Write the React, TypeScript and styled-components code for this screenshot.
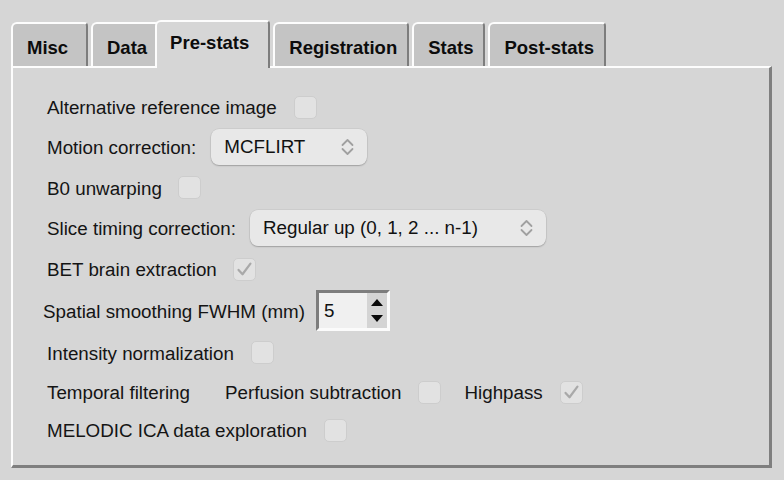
import React from "react";
import styled, { createGlobalStyle, css } from "styled-components";

const Global = createGlobalStyle`
  html, body { margin: 0; padding: 0; background: #d6d6d6; }
  body { font-family: "Liberation Sans", Arial, Helvetica, sans-serif; color: #111; }
  * { box-sizing: border-box; }
`;

const Window = styled.div`
  width: 784px;
  height: 480px;
  padding: 20px 0 0 11px;
  background: #d6d6d6;
  overflow: hidden;
`;

const TabBar = styled.div`
  display: flex;
  align-items: flex-end;
  gap: 3px;
  height: 46px;
  position: relative;
  z-index: 2;
`;

const Tab = styled.div<{ $active?: boolean; $minW?: number }>`
  display: flex;
  align-items: center;
  min-width: ${(p) => p.$minW ?? 0}px;
  height: 44px;
  padding: 5px 10px 0 14px;
  font-size: 18.5px;
  font-weight: 700;
  color: #0c0c0c;
  background: #c4c4c4;
  border-top: 2px solid #fdfdfd;
  border-left: 2px solid #fdfdfd;
  border-right: 2px solid #7d7d7d;
  border-top-left-radius: 6px;
  border-top-right-radius: 4px;
  white-space: nowrap;
  ${(p) =>
    p.$active &&
    css`
      position: relative;
      height: 48px;
      margin: 0 0 -2px -7px;
      padding: 0 19px 4px 13px;
      background: #d6d6d6;
    `}
`;

const Panel = styled.div`
  width: 761px;
  height: 402px;
  background: #d6d6d6;
  border-top: 2px solid #fdfdfd;
  border-left: 2px solid #fdfdfd;
  border-right: 3px solid #7f7f7f;
  border-bottom: 3px solid #7f7f7f;
  padding: 20px 0 0 34px;
  display: grid;
  grid-template-rows: 40px 40px 41px 40px 42px 42px 41px 38px 38px;
  align-content: start;
`;

const Row = styled.div<{ $gap?: number; $shift?: number }>`
  display: flex;
  align-items: center;
  gap: ${(p) => p.$gap ?? 17}px;
  margin-left: ${(p) => p.$shift ?? 0}px;
`;

const Label = styled.span<{ $ml?: number }>`
  font-size: 18.8px;
  color: #141414;
  white-space: nowrap;
  margin-left: ${(p) => p.$ml ?? 0}px;
`;

const Box = styled.div`
  width: 23px;
  height: 23px;
  margin-top: -2px;
  border-radius: 5px;
  background: #e2e2e2;
  border: 1px solid #cdcdcd;
  display: flex;
  align-items: center;
  justify-content: center;
`;

const Check = ({ checked }: { checked?: boolean }) => (
  <Box>
    {checked && (
      <svg width="19" height="19" viewBox="0 0 24 24">
        <path d="M4.5 12.5 L9.5 18 L19.5 4.5" fill="none" stroke="#a9a9a9" strokeWidth="2.8" strokeLinecap="round" strokeLinejoin="round" />
      </svg>
    )}
  </Box>
);

const SelectBox = styled.div<{ $w: number }>`
  width: ${(p) => p.$w}px;
  height: 36px;
  margin-top: -3px;
  border-radius: 8px;
  background: #e8e8e8;
  box-shadow: 0 1px 1.5px rgba(0, 0, 0, 0.22), 0 0 0 0.5px rgba(0, 0, 0, 0.08);
  display: flex;
  align-items: center;
  justify-content: space-between;
  padding: 0 13px 0 13px;
  font-size: 18.8px;
  color: #111;
  white-space: nowrap;
`;

const Chevrons = () => (
  <svg width="13" height="18" viewBox="0 0 13 18">
    <path d="M1.5 7 L6.5 2 L11.5 7" fill="none" stroke="#a0a0a0" strokeWidth="1.8" strokeLinecap="round" strokeLinejoin="round" />
    <path d="M1.5 11 L6.5 16 L11.5 11" fill="none" stroke="#a0a0a0" strokeWidth="1.8" strokeLinecap="round" strokeLinejoin="round" />
  </svg>
);

const Select = ({ value, width }: { value: string; width: number }) => (
  <SelectBox $w={width}>
    <span>{value}</span>
    <Chevrons />
  </SelectBox>
);

const Spin = styled.div`
  width: 74px;
  height: 41px;
  margin-top: -3px;
  display: flex;
  border: 3px solid;
  border-color: #7d7d7d #fbfbfb #fbfbfb #7d7d7d;
  background: #f0f0f0;
`;

const SpinField = styled.div`
  flex: 1;
  display: flex;
  align-items: center;
  padding-left: 5px;
  font-size: 18.8px;
  color: #111;
  background: #f0f0f0;
`;

const SpinButtons = styled.div`
  width: 20px;
  background: #d4d4d4;
  display: flex;
  flex-direction: column;
  align-items: center;
  justify-content: space-between;
  padding: 6px 0 6px;
`;

const Arrow = ({ down }: { down?: boolean }) => (
  <svg width="12" height="7" viewBox="0 0 12 7">
    <path d={down ? "M0 0 L12 0 L6 7 Z" : "M0 7 L12 7 L6 0 Z"} fill="#0a0a0a" />
  </svg>
);

const SpinBox = ({ value }: { value: string }) => (
  <Spin>
    <SpinField>{value}</SpinField>
    <SpinButtons>
      <Arrow />
      <Arrow down />
    </SpinButtons>
  </Spin>
);

const tabs = ["Misc", "Data", "Pre-stats", "Registration", "Stats", "Post-stats"];

export default function App() {
  return (
    <Window>
      <Global />
      <TabBar>
        {tabs.map((t) => (
          <Tab key={t} $active={t === "Pre-stats"} $minW={t === "Misc" ? 77 : undefined}>
            {t}
          </Tab>
        ))}
      </TabBar>
      <Panel>
        <Row>
          <Label>Alternative reference image</Label>
          <Check />
        </Row>
        <Row $gap={15}>
          <Label>Motion correction:</Label>
          <Select value="MCFLIRT" width={156} />
        </Row>
        <Row $gap={16}>
          <Label>B0 unwarping</Label>
          <Check />
        </Row>
        <Row $gap={14}>
          <Label>Slice timing correction:</Label>
          <Select value="Regular up (0, 1, 2 ... n-1)" width={296} />
        </Row>
        <Row $gap={16}>
          <Label>BET brain extraction</Label>
          <Check checked />
        </Row>
        <Row $gap={11} $shift={-4}>
          <Label>Spatial smoothing FWHM (mm)</Label>
          <SpinBox value="5" />
        </Row>
        <Row>
          <Label>Intensity normalization</Label>
          <Check />
        </Row>
        <Row>
          <Label>Temporal filtering</Label>
          <Label $ml={18}>Perfusion subtraction</Label>
          <Check />
          <Label $ml={6}>Highpass</Label>
          <Check checked />
        </Row>
        <Row>
          <Label>MELODIC ICA data exploration</Label>
          <Check />
        </Row>
      </Panel>
    </Window>
  );
}
